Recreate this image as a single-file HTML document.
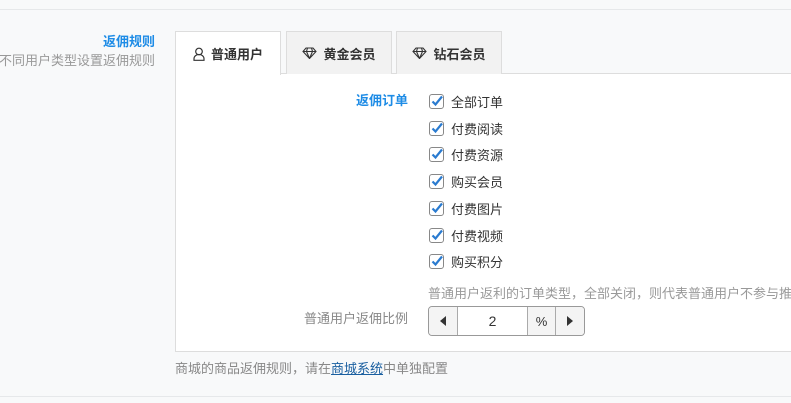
<!DOCTYPE html>
<html><head><meta charset="utf-8"><style>
*{box-sizing:border-box;margin:0;padding:0}
body{width:791px;height:403px;background:#f8f9fa;font-family:"Liberation Sans","Noto Sans CJK SC",sans-serif;font-size:13px;color:#333;position:relative;overflow:hidden}
.abs{position:absolute;white-space:nowrap}
.line{position:absolute;left:0;width:791px;height:1px;background:#e6e8ea}
.tab{position:absolute;top:31px;height:43px;border:1px solid #ddd;border-bottom:none;background:#f2f2f2;font-weight:bold;font-size:13px;display:flex;align-items:center;justify-content:center;gap:6px;color:#333}
.panel{position:absolute;left:175px;top:73px;width:630px;height:279px;background:#fff;border:1px solid #ddd}
.cb{position:absolute;left:429px;width:15px;height:15px;border:1px solid #888;border-radius:3px;background:#fff}
.cb svg{position:absolute;left:1px;top:0}
.cl{position:absolute;left:451px;font-size:13px;color:#333}
</style></head><body>
<div class="line" style="top:9px"></div>
<div class="line" style="top:396px"></div>
<div class="abs" style="right:636px;top:31px;color:#1e8ce6;font-weight:bold;font-size:13px">返佣规则</div>
<div class="abs" style="right:636px;top:50px;color:#999;font-size:13px">不同用户类型设置返佣规则</div>
<div class="panel"></div>
<div class="tab" style="left:175px;width:106px;background:#fff;height:44px;z-index:2">
<svg width="12" height="14" viewBox="0 0 12 14"><circle cx="6" cy="4.5" r="3.3" fill="none" stroke="#333" stroke-width="1.2"/><path d="M1 13.3v-1.5a4 3.5 0 0 1 10 0v1.5z" fill="none" stroke="#333" stroke-width="1.2"/></svg>普通用户</div>
<div class="tab" style="left:286px;width:106px">
<svg width="15" height="12" viewBox="0 0 15 12"><path d="M4 1h7l3 3.5-6.5 7-6.5-7z M1 4.5h13 M5.5 1 4.5 4.5l3 7 3-7-1-3.5" fill="none" stroke="#333" stroke-width="1.1"/></svg>黄金会员</div>
<div class="tab" style="left:396px;width:106px">
<svg width="15" height="12" viewBox="0 0 15 12"><path d="M4 1h7l3 3.5-6.5 7-6.5-7z M1 4.5h13 M5.5 1 4.5 4.5l3 7 3-7-1-3.5" fill="none" stroke="#333" stroke-width="1.1"/></svg>钻石会员</div>
<div class="abs" style="left:356px;top:90px;color:#1e8ce6;font-weight:bold">返佣订单</div>
<div id="cbs"></div>
<div class="abs" style="left:428px;top:283px;color:#999">普通用户返利的订单类型，全部关闭，则代表普通用户不参与推</div>
<div class="abs" style="left:304px;top:308px;color:#888">普通用户返佣比例</div>
<div class="abs" style="left:428px;top:306px;width:157px;height:30px;border:1px solid #999;border-radius:4px;display:flex;overflow:hidden">
<div style="width:29px;background:#f4f4f4;border-right:1px solid #aaa;display:flex;align-items:center;justify-content:center"><svg width="6" height="10"><path d="M6 0v10L0 5z" fill="#333"/></svg></div>
<div style="width:69px;display:flex;align-items:center;justify-content:center;font-size:14px">2</div>
<div style="width:29px;background:#f4f4f4;border-left:1px solid #aaa;border-right:1px solid #aaa;display:flex;align-items:center;justify-content:center;font-size:13px">%</div>
<div style="flex:1;background:#f4f4f4;display:flex;align-items:center;justify-content:center"><svg width="6" height="10"><path d="M0 0v10L6 5z" fill="#333"/></svg></div>
</div>
<div class="abs" style="left:175px;top:358px;color:#888">商城的商品返佣规则，请在<span style="color:#1a5fa0;text-decoration:underline">商城系统</span>中单独配置</div>
<script>
var L=["全部订单","付费阅读","付费资源","购买会员","付费图片","付费视频","购买积分"],Y=[94,121,147,174,201,228,254],h="";
for(var i=0;i<7;i++){h+='<div class="cb" style="top:'+Y[i]+'px"><svg width="12" height="12" viewBox="0 0 12 12"><path d="M1.5 6.5l3 3L11 1.5" fill="none" stroke="#2a7bd0" stroke-width="2.2"/></svg></div><div class="cl" style="top:'+(Y[i]-2)+'px">'+L[i]+'</div>';}
document.getElementById("cbs").innerHTML=h;
</script>
</body></html>
